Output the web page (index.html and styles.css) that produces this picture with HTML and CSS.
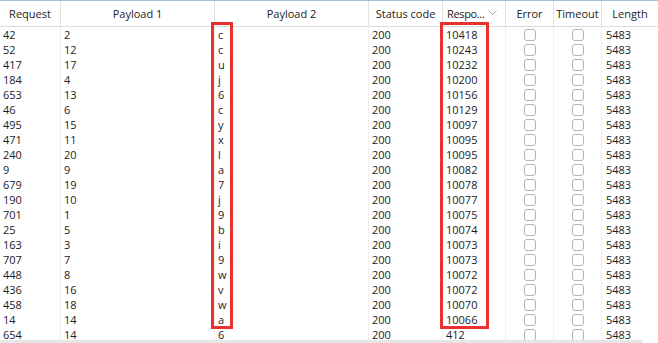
FILE: index.html
```html
<!DOCTYPE html>
<html>
<head>
<meta charset="utf-8">
<link rel="stylesheet" href="styles.css">
</head>
<body>
<div class="viewport">
  <div class="table">
    <div class="row head">
      <div class="cell">Request</div>
      <div class="cell">Payload 1</div>
      <div class="cell">Payload 2</div>
      <div class="cell">Status code</div>
      <div class="cell sorted"><span class="sort-label">Respo...</span><svg class="chev" width="9" height="6" viewBox="0 0 9 6"><path d="M0.5 0.5 L4.5 4.5 L8.5 0.5" fill="none" stroke="#a6a6a6" stroke-width="1"/></svg></div>
      <div class="cell">Error</div>
      <div class="cell">Timeout</div>
      <div class="cell">Length</div>
    </div>
    <div id="rows"></div>
  </div>
  <div class="mark mark-p2"></div>
  <div class="mark mark-resp"></div>
  <div class="hscroll"></div>
</div>
<script>
const data = [
["42","2","c","200","10418","5483"],
["52","12","c","200","10243","5483"],
["417","17","u","200","10232","5483"],
["184","4","j","200","10200","5483"],
["653","13","6","200","10156","5483"],
["46","6","c","200","10129","5483"],
["495","15","y","200","10097","5483"],
["471","11","x","200","10095","5483"],
["240","20","l","200","10095","5483"],
["9","9","a","200","10082","5483"],
["679","19","7","200","10078","5483"],
["190","10","j","200","10077","5483"],
["701","1","9","200","10075","5483"],
["25","5","b","200","10074","5483"],
["163","3","i","200","10073","5483"],
["707","7","9","200","10073","5483"],
["448","8","w","200","10072","5483"],
["436","16","v","200","10072","5483"],
["458","18","w","200","10070","5483"],
["14","14","a","200","10066","5483"],
["654","14","6","200","412","5483"]
];
const rows = document.getElementById('rows');
for (const r of data) {
  const row = document.createElement('div');
  row.className = 'row';
  const cells = [r[0], r[1], r[2], r[3], r[4], null, null, r[5]];
  cells.forEach((v, i) => {
    const c = document.createElement('div');
    c.className = 'cell' + (i === 7 ? ' len' : '');
    if (v === null) {
      c.classList.add('chk');
      const b = document.createElement('span');
      b.className = 'box';
      c.appendChild(b);
    } else {
      c.textContent = v;
    }
    row.appendChild(c);
  });
  rows.appendChild(row);
}
</script>
</body>
</html>
```
FILE: styles.css
```css
html, body {
  margin: 0;
  padding: 0;
  background: #ffffff;
}
body {
  font-family: "Open Sans", "DejaVu Sans", sans-serif;
  font-size: 11px;
  color: #1c1c1c;
  width: 658px;
  height: 343px;
  overflow: hidden;
}
.viewport {
  position: relative;
  height: 343px;
  overflow: hidden;
}
.row {
  display: grid;
  grid-template-columns: 60px 154px 154px 74px 63px 48px 48px 57px;
  height: 15px;
  line-height: 15px;
}
.row .cell {
  padding-left: 3px;
  white-space: nowrap;
  overflow: hidden;
  border-left: 1px solid #efefef;
}
.row .cell:first-child {
  border-left: none;
}
.row .cell.len {
  padding-left: 4px;
}
.row.head {
  height: 25px;
  line-height: 25px;
  border-top: 1px solid #a9bcd9;
  border-bottom: 1px solid #dcdcdc;
}
.row.head .cell {
  text-align: center;
  padding-left: 0;
  border-left: 1px solid #e2e2e2;
  color: #222222;
}
.row.head .cell:first-child {
  border-left: none;
}
.row.head .cell.sorted {
  display: flex;
  align-items: center;
  justify-content: space-between;
  text-align: left;
  padding-left: 4px;
  padding-right: 8px;
}
.sort-label {
  letter-spacing: -0.35px;
}
.chev {
  display: block;
  margin-top: -1px;
}
.cell.chk {
  display: flex;
  align-items: center;
  justify-content: center;
  padding-left: 0;
}
.box {
  display: block;
  width: 10px;
  height: 10px;
  border: 1px solid #b4b4b4;
  border-radius: 3px;
  background: #ffffff;
}
.mark {
  position: absolute;
  top: 22px;
  height: 301px;
  border: 3px solid #e8312e;
  pointer-events: none;
}
.mark-p2 {
  left: 211px;
  width: 16px;
}
.mark-resp {
  left: 440px;
  width: 43px;
}
.hscroll {
  position: absolute;
  left: 0;
  bottom: 0;
  height: 3px;
  width: 643px;
  background: #e6e6e6;
}
```
